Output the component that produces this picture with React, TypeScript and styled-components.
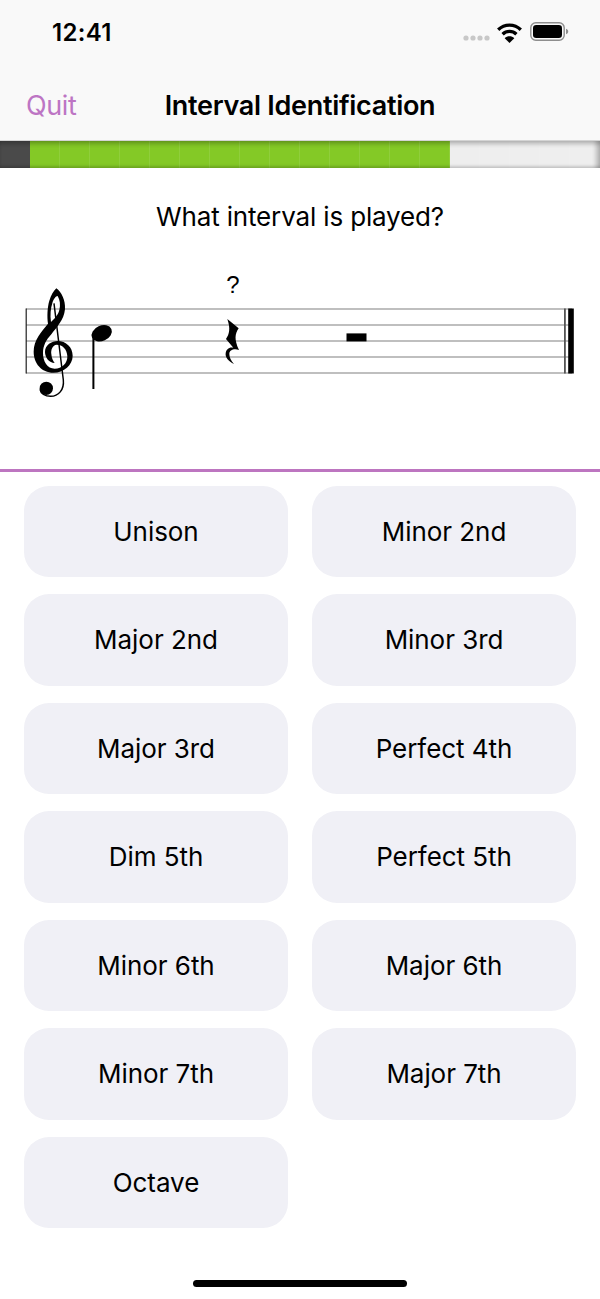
import styled, { createGlobalStyle } from "styled-components";

const GlobalStyle = createGlobalStyle`
  html, body {
    margin: 0;
    padding: 0;
    background: #fff;
  }
  body {
    font-family: Inter, "Noto Sans", sans-serif;
    color: #000;
  }
`;

const Screen = styled.div`
  width: 600px;
  height: 1299px;
  display: flex;
  flex-direction: column;
  overflow: hidden;
`;

const Header = styled.header`
  height: 140px;
  background: #f9f9f9;
  border-bottom: 1px solid #d4d4d4;
`;

const StatusBar = styled.div`
  height: 64px;
  display: flex;
  align-items: center;
  justify-content: space-between;
  padding: 0 31px 0 52px;
`;

const Clock = styled.span`
  font-size: 24px;
  font-weight: 600;
  letter-spacing: 0.3px;
`;

const StatusIcons = styled.div`
  display: flex;
  align-items: center;
`;

const NavBar = styled.nav`
  height: 76px;
  display: grid;
  grid-template-columns: 1fr auto 1fr;
  align-items: center;
  padding: 7px 26px 0;
  box-sizing: border-box;
`;

const QuitLink = styled.a`
  font-size: 27px;
  letter-spacing: -0.4px;
  color: #bd75c4;
`;

const NavTitle = styled.h1`
  margin: 0;
  font-size: 27px;
  font-weight: 600;
  letter-spacing: -0.3px;
`;

const Track = styled.div`
  position: relative;
  height: 27px;
  display: flex;
  flex: none;

  &::after {
    content: "";
    position: absolute;
    inset: 0;
    box-shadow: inset 0 5px 4px -2px rgba(0, 0, 0, 0.24), inset 0 -3px 3px -1px rgba(0, 0, 0, 0.16),
      inset -6px 0 4px -2px rgba(0, 0, 0, 0.22);
  }
`;

const segmentColors = {
  current: "#4a4a4a",
  done: "#84c926",
  todo: "#eeeeee",
};

const Segment = styled.div<{ $state: keyof typeof segmentColors }>`
  flex: 1;
  background: ${({ $state }) => segmentColors[$state]};
  box-shadow: inset -1px 0 0 rgba(255, 255, 255, ${({ $state }) => ($state === "current" ? 0 : 0.1)});
`;

const ScoreSection = styled.section`
  height: 301px;
  flex: none;
  border-bottom: 3px solid #bd75c0;
  display: flex;
  flex-direction: column;
  align-items: center;
`;

const Question = styled.p`
  margin: 33px 0 0;
  height: 32px;
  line-height: 32px;
  font-size: 26px;
  letter-spacing: -0.15px;
`;

const Staff = styled.svg`
  display: block;
  margin-top: 37px;
`;

const QuestionMark = styled.text`
  font-family: "Liberation Sans", sans-serif;
  font-size: 24px;
`;

const AnswerGrid = styled.div`
  display: grid;
  grid-template-columns: 264px 264px;
  grid-auto-rows: 91.7px;
  column-gap: 24px;
  row-gap: 16.8px;
  padding: 13.8px 24px 0;
`;

const AnswerButton = styled.button`
  border: 0;
  padding: 0 0 1px;
  border-radius: 25px;
  background: #f0f0f6;
  color: #000;
  font-family: inherit;
  font-size: 26px;
  letter-spacing: -0.05px;
`;

const HomeBar = styled.div`
  width: 214px;
  height: 7px;
  border-radius: 4px;
  background: #000;
  margin: auto auto 12px;
`;

const answers = [
  "Unison",
  "Minor 2nd",
  "Major 2nd",
  "Minor 3rd",
  "Major 3rd",
  "Perfect 4th",
  "Dim 5th",
  "Perfect 5th",
  "Minor 6th",
  "Major 6th",
  "Minor 7th",
  "Major 7th",
  "Octave",
];

const segments = Array.from({ length: 20 }, (_, i) =>
  i === 0 ? "current" : i < 15 ? "done" : "todo"
) as (keyof typeof segmentColors)[];

const StatusGlyphs = () => (
  <svg width="108" height="24" viewBox="0 0 108 24">
    <g fill="#c8c8c8">
      <circle cx="5" cy="18" r="2.6" />
      <circle cx="12" cy="18" r="2.6" />
      <circle cx="19" cy="18" r="2.6" />
      <circle cx="26" cy="18" r="2.6" />
    </g>
    <g fill="none" stroke="#000" strokeWidth="3.3">
      <path d="M37.2 9.8C43.5 3.6 53.5 3.6 59.8 9.8" />
      <path d="M41.6 14.2C45.5 10.4 51.5 10.4 55.4 14.2" />
    </g>
    <path d="M48.5 23L43.7 18.2C46.4 15.6 50.6 15.6 53.3 18.2Z" fill="#000" />
    <rect x="69.8" y="2.8" width="33.4" height="17.4" rx="5" fill="none" stroke="#8e8e8e" strokeWidth="1.4" />
    <rect x="72" y="5" width="29" height="13" rx="3.2" fill="#000" />
    <path d="M105 8.8C106.4 9.2 107.2 10.2 107.2 11.5C107.2 12.8 106.4 13.8 105 14.2Z" fill="#8e8e8e" />
  </svg>
);

const TrebleClef = () => (
  <g transform="translate(10 270) scale(0.3333)">
    <path
      fillRule="evenodd"
      d="M139 55C154 66 167 90 165 118C162 150 140 172 124 193C108 210 99 228 99 249C99 275 112 296 134 296C156 296 173 280 172 258C171 238 158 224 140 224C128 224 122 240 124 252C125 265 129 272 134 279C118 279 105 263 105 246C105 225 125 213 143 213C168 213 188 232 188 257C188 285 162 308 130 308C95 308 71 280 71 245C71 210 95 185 114 161C111 140 112 112 118 92C123 76 131 62 139 55ZM143 78C137 78 130 88 127 100C122 115 120 135 123 156C133 146 144 136 148 120C152 105 150 90 143 78Z"
    />
    <path
      d="M132 100L160 330C163 360 145 379 122 379C105 379 92 370 90 358"
      fill="none"
      stroke="#000"
      strokeWidth="4.4"
    />
    <circle cx="109" cy="355" r="20" />
  </g>
);

const QuarterRest = () => (
  <g transform="translate(210 270) scale(0.3333)">
    <path d="M52 147L86 175C75 192 72 208 87 240C72 235 58 240 58 252C58 262 63 272 72 282C56 275 45 262 47 250C48 238 58 230 70 233L48 207C58 192 62 176 52 147Z" />
  </g>
);

const staffLines = [39, 55, 71, 87, 103];

const Score = () => (
  <Staff width="600" height="140" viewBox="0 270 600 140">
    {staffLines.map((y) => (
      <rect key={y} x="26" y={270 + y - 0.8} width="546" height="1.6" fill="#b0b0b0" />
    ))}
    <rect x="25.6" y="308.5" width="1.2" height="65" fill="#222" />
    <TrebleClef />
    <ellipse cx="101.7" cy="333.3" rx="10.6" ry="7.6" transform="rotate(-24 101.7 333.3)" />
    <rect x="92.4" y="334" width="2" height="55" />
    <QuestionMark x="233" y="293" textAnchor="middle">?</QuestionMark>
    <QuarterRest />
    <rect x="346.5" y="333.4" width="20" height="8" />
    <rect x="564" y="308.5" width="1.8" height="65" fill="#555" />
    <rect x="568.2" y="308.5" width="5.6" height="65" />
  </Staff>
);

export default function App() {
  return (
    <>
      <GlobalStyle />
      <Screen>
        <Header>
          <StatusBar>
            <Clock>12:41</Clock>
            <StatusIcons>
              <StatusGlyphs />
            </StatusIcons>
          </StatusBar>
          <NavBar>
            <QuitLink>Quit</QuitLink>
            <NavTitle>Interval Identification</NavTitle>
          </NavBar>
        </Header>
        <Track>
          {segments.map((state, i) => (
            <Segment key={i} $state={state} />
          ))}
        </Track>
        <ScoreSection>
          <Question>What interval is played?</Question>
          <Score />
        </ScoreSection>
        <AnswerGrid>
          {answers.map((label) => (
            <AnswerButton key={label}>{label}</AnswerButton>
          ))}
        </AnswerGrid>
        <HomeBar />
      </Screen>
    </>
  );
}
